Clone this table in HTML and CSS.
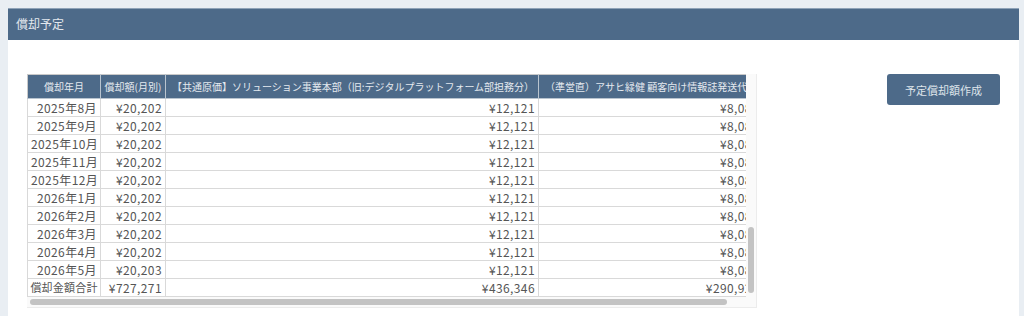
FILE: index.html
```html
<!DOCTYPE html>
<html lang="ja">
<head>
<meta charset="utf-8">
<title>償却予定</title>
<link rel="stylesheet" href="styles.css">
</head>
<body>
<section class="panel">
  <header class="panel-head">償却予定</header>
  <div class="panel-body">
    <div class="scroller">
      <div class="scroll-main">
        <div class="viewport">
          <table class="grid">
            <colgroup>
              <col class="c1"><col class="c2"><col class="c3"><col class="c4">
            </colgroup>
            <thead>
              <tr>
                <th>償却年月</th>
                <th>償却額(月別)</th>
                <th class="th-left">【共通原価】ソリューション事業本部（旧:デジタルプラットフォーム部担務分）</th>
                <th class="th-left">（準営直）アサヒ緑健 顧客向け情報誌発送代</th>
              </tr>
            </thead>
            <tbody>
              <tr><td>2025年8月</td><td>¥20,202</td><td>¥12,121</td><td>¥8,081</td></tr>
              <tr><td>2025年9月</td><td>¥20,202</td><td>¥12,121</td><td>¥8,081</td></tr>
              <tr><td>2025年10月</td><td>¥20,202</td><td>¥12,121</td><td>¥8,081</td></tr>
              <tr><td>2025年11月</td><td>¥20,202</td><td>¥12,121</td><td>¥8,081</td></tr>
              <tr><td>2025年12月</td><td>¥20,202</td><td>¥12,121</td><td>¥8,081</td></tr>
              <tr><td>2026年1月</td><td>¥20,202</td><td>¥12,121</td><td>¥8,081</td></tr>
              <tr><td>2026年2月</td><td>¥20,202</td><td>¥12,121</td><td>¥8,081</td></tr>
              <tr><td>2026年3月</td><td>¥20,202</td><td>¥12,121</td><td>¥8,081</td></tr>
              <tr><td>2026年4月</td><td>¥20,202</td><td>¥12,121</td><td>¥8,081</td></tr>
              <tr><td>2026年5月</td><td>¥20,203</td><td>¥12,121</td><td>¥8,082</td></tr>
              <tr class="total"><td>償却金額合計</td><td>¥727,271</td><td>¥436,346</td><td>¥290,925</td></tr>
            </tbody>
          </table>
        </div>
        <div class="vtrack"><div class="vthumb"></div></div>
      </div>
      <div class="htrack"><div class="hthumb"></div></div>
    </div>
    <button class="btn" type="button">予定償却額作成</button>
  </div>
</section>
</body>
</html>
```
FILE: styles.css
```css
html, body {
  margin: 0;
  padding: 0;
  background: #e9eef3;
}
body {
  padding: 8px 5px 0 8px;
  font-family: "Noto Sans CJK JP", "Noto Sans", sans-serif;
  color: #555;
}
.panel {
  background: #fff;
}
.panel-head {
  height: 31px;
  border-top: 1px solid #8ea2b7;
  background: #4d6a89;
  color: #e3e8ee;
  font-size: 12px;
  line-height: 30px;
  padding-left: 8px;
}
.panel-body {
  display: flex;
  justify-content: space-between;
  align-items: flex-start;
  padding: 34px 19px 20px 19px;
}
.scroller {
  width: 730px;
  border-right: 1px solid #ececec;
  border-bottom: 1px solid #ececec;
  box-sizing: border-box;
  background: #fafafa;
}
.scroll-main {
  display: flex;
}
.viewport {
  width: 720px;
  overflow: hidden;
  background: #fff;
}
.grid {
  border-collapse: collapse;
  table-layout: fixed;
  width: 735px;
  font-size: 12px;
}
.c1 { width: 73px; }
.c2 { width: 65px; }
.c3 { width: 373px; }
.c4 { width: 224px; }
.grid th {
  height: 23px;
  padding: 0 3px;
  background: #4d6a89;
  color: #e4e9ef;
  font-weight: normal;
  font-size: 10px;
  white-space: nowrap;
  overflow: hidden;
  border: 1px solid #b9c4cf;
  border-top-color: #c9c9c9;
  text-align: center;
}
.grid th:first-child { border-left-color: #c9c9c9; }
.grid th.th-left { text-align: left; padding-left: 6px; }
.grid td {
  height: 17px;
  padding: 0 3px;
  line-height: 17px;
  border: 1px solid #d9d9d9;
  text-align: right;
  white-space: nowrap;
  overflow: hidden;
  color: #555;
  letter-spacing: 0.4px;
}
.grid tr.total td:first-child {
  font-size: 11px;
  text-align: center;
  padding: 0 1px;
  letter-spacing: 0.2px;
}
.vtrack {
  width: 10px;
  display: flex;
  flex-direction: column;
  align-items: center;
}
.vthumb {
  margin-top: 153px;
  width: 6px;
  height: 66px;
  border-radius: 3px;
  background: #c3c3c3;
}
.htrack {
  height: 10px;
  padding: 2px 0 0 3px;
  box-sizing: border-box;
  background: #fafafa;
}
.hthumb {
  width: 697px;
  height: 6px;
  border-radius: 3px;
  background: #c3c3c3;
}
.btn {
  width: 113px;
  height: 31px;
  border: none;
  border-radius: 3px;
  background: #4d6a89;
  color: #dfe5eb;
  font-family: "Noto Sans CJK JP", "Noto Sans", sans-serif;
  font-size: 11px;
  padding: 0;
  cursor: pointer;
}
```
